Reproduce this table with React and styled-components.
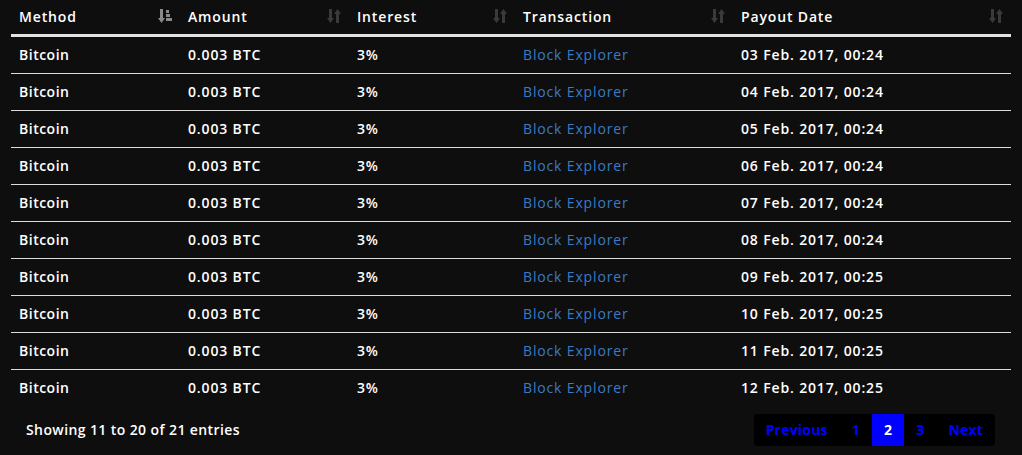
import styled, { createGlobalStyle } from "styled-components"

const GlobalStyle = createGlobalStyle`
  body {
    margin: 0;
    background: #0e0e0e;
    font-family: "Open Sans", "Liberation Sans", sans-serif;
    letter-spacing: 0.85px;
  }
`

const Wrapper = styled.div`
  width: 1022px;
  height: 455px;
  padding: 0 11px;
  box-sizing: border-box;
  background: #0e0e0e;
  color: #fff;
`

const Table = styled.table`
  width: 1000px;
  border-collapse: collapse;
  table-layout: fixed;
`

const Th = styled.th`
  width: ${(p) => p.$w}px;
  height: 35px;
  padding: 0 8px 1px;
  box-sizing: border-box;
  text-align: left;
  font-size: 14px;
  font-weight: 600;
  color: #fff;
  border-bottom: 3px solid #e2e2e2;
`

const HeadInner = styled.div`
  display: flex;
  align-items: center;
  justify-content: space-between;
`

const Row = styled.tr`
  & + & td {
    border-top: 1px solid #dcdcdc;
  }
`

const Td = styled.td`
  height: 36px;
  padding: 0 8px;
  font-size: 14px;
  font-weight: 600;
  letter-spacing: ${(p) => (p.$tight ? 0.5 : 0.85)}px;
  color: ${(p) => (p.$link ? "#3b7bc4" : "#fff")};
  ${(p) => p.$link && "font-weight: 400;"}
`

const Footer = styled.div`
  display: flex;
  align-items: center;
  justify-content: space-between;
  margin-top: 8px;
  padding: 0 16px 0 15px;
`

const Info = styled.div`
  font-size: 14px;
  font-weight: 600;
  letter-spacing: 0.4px;
`

const Pager = styled.div`
  display: flex;
  height: 32px;
  background: #000;
  border-radius: 4px;
  overflow: hidden;
`

const PageItem = styled.span`
  display: flex;
  align-items: center;
  padding: 0 12px;
  font-size: 14px;
  font-weight: 700;
  letter-spacing: 0.2px;
  color: ${(p) => (p.$active ? "#fff" : "#0000ff")};
  background: ${(p) => (p.$active ? "#0000ff" : "transparent")};
`

const SortIcon = ({ active }) =>
  active ? (
    <svg width="14" height="16" viewBox="0 0 14 16">
      <g fill="#8a8a8a">
        <rect x="2" y="1" width="3" height="10" />
        <polygon points="0,10 7,10 3.5,15" />
        <rect x="8" y="2" width="3" height="3" />
        <rect x="8" y="6" width="4" height="3" />
        <rect x="8" y="10" width="6" height="3" />
      </g>
    </svg>
  ) : (
    <svg width="14" height="16" viewBox="0 0 14 16">
      <g fill="#3a3a3a">
        <rect x="2" y="1" width="3" height="10" />
        <polygon points="0,10 7,10 3.5,15" />
        <rect x="9" y="5" width="3" height="10" />
        <polygon points="7,6 14,6 10.5,1" />
      </g>
    </svg>
  )

const columns = [
  { label: "Method", w: 169, active: true },
  { label: "Amount", w: 169 },
  { label: "Interest", w: 166 },
  { label: "Transaction", w: 218 },
  { label: "Payout Date", w: 278 },
]

const dates = [
  "03 Feb. 2017, 00:24",
  "04 Feb. 2017, 00:24",
  "05 Feb. 2017, 00:24",
  "06 Feb. 2017, 00:24",
  "07 Feb. 2017, 00:24",
  "08 Feb. 2017, 00:24",
  "09 Feb. 2017, 00:25",
  "10 Feb. 2017, 00:25",
  "11 Feb. 2017, 00:25",
  "12 Feb. 2017, 00:25",
]

const App = () => {
  return (
    <Wrapper>
      <GlobalStyle />
      <Table>
        <thead>
          <tr>
            {columns.map((c) => (
              <Th key={c.label} $w={c.w}>
                <HeadInner>
                  {c.label}
                  <SortIcon active={c.active} />
                </HeadInner>
              </Th>
            ))}
          </tr>
        </thead>
        <tbody>
          {dates.map((d) => (
            <Row key={d}>
              <Td $tight>Bitcoin</Td>
              <Td>0.003 BTC</Td>
              <Td>3%</Td>
              <Td $link>Block Explorer</Td>
              <Td>{d}</Td>
            </Row>
          ))}
        </tbody>
      </Table>
      <Footer>
        <Info>Showing 11 to 20 of 21 entries</Info>
        <Pager>
          <PageItem>Previous</PageItem>
          <PageItem>1</PageItem>
          <PageItem $active>2</PageItem>
          <PageItem>3</PageItem>
          <PageItem>Next</PageItem>
        </Pager>
      </Footer>
    </Wrapper>
  )
}

export default App
